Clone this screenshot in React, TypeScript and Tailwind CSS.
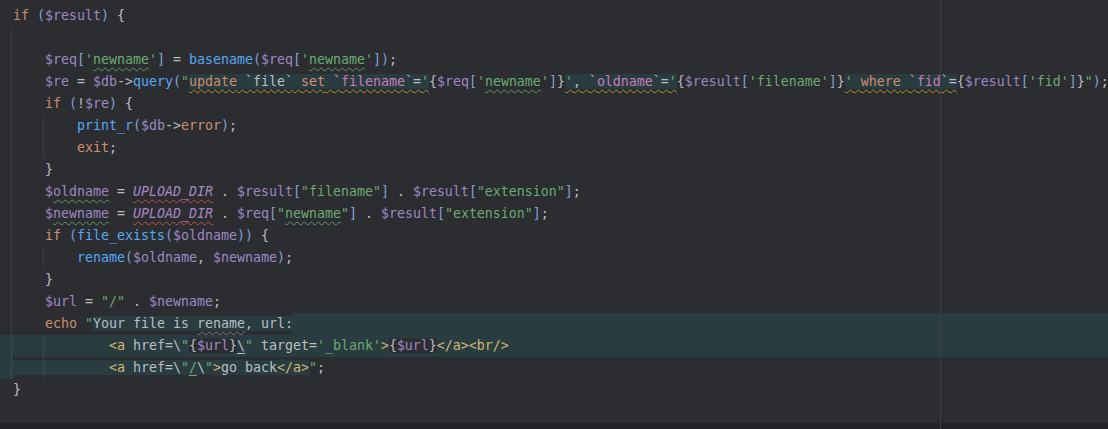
import React from "react";

type Tok = { t: string; c?: string };
type Line = { toks: Tok[]; rowBg?: boolean; leadBg?: boolean; fill?: boolean; g1?: boolean; g2?: boolean };

const D = "text-[#BCBEC4]";
const K = "text-[#CF8E6D]";
const V = "text-[#9F87C6]";
const F = "text-[#56A8F5]";
const S = "text-[#6AAB73]";
const P = "text-[#7FA2D8]";
const SQ = "text-[#C77DBB]";
const TAG = "text-[#D5B778]";
const HL = "bg-[#293C40]";
const NOHL = "bg-[#2B2D30]";
const GW = "underline decoration-wavy decoration-[#5F9A62] underline-offset-[3px] decoration-1";
const RW = "underline decoration-wavy decoration-[#C3504B] underline-offset-[3px] decoration-1";
const YW = "underline decoration-wavy decoration-[#B5962F] underline-offset-[3px] decoration-1";
const GRW = "underline decoration-wavy decoration-[#7A7C80] underline-offset-[3px] decoration-1";
const CONST = "text-[#A786C4] italic";

const t = (text: string, c: string = D): Tok => ({ t: text, c });

const sqlSeg = (toks: Tok[]): Tok[] =>
  toks.map((x) => ({ t: x.t, c: `${x.c} ${HL} ${YW}` }));

const lines: Line[] = [
  { toks: [t("if", K), t(" "), t("(", P), t("$result", V), t(")", P), t(" {")] },
  { toks: [], g1: true },
  {
    g1: true,
    toks: [
      t("    "), t("$req", V), t("[", P), t("'", S), t("newname", `${S} ${GW}`), t("'", S), t("]", P),
      t(" = "), t("basename", F), t("(", P), t("$req", V), t("[", P), t("'", S), t("newname", `${S} ${GW}`),
      t("'", S), t("]", P), t(")", P), t(";"),
    ],
  },
  {
    g1: true,
    toks: [
      t("    "), t("$re", V), t(" = "), t("$db", V), t("->"), t("query", F), t("(", P), t("\"", S),
      ...sqlSeg([t("update", K), t(" "), t("`file`"), t(" "), t("set", K), t(" "), t("`"), t("filename", SQ), t("`"), t("="), t("'", S)]),
      t("{"), t("$req", V), t("[", P), t("'", S), t("newname", `${S} ${GW}`), t("'", S), t("]", P), t("}"),
      ...sqlSeg([t("'", S), t(","), t(" "), t("`"), t("oldname", SQ), t("`"), t("="), t("'", S)]),
      t("{"), t("$result", V), t("[", P), t("'filename'", S), t("]", P), t("}"),
      ...sqlSeg([t("'", S), t(" "), t("where", K), t(" "), t("`"), t("fid", SQ), t("`"), t("=")]),
      t("{"), t("$result", V), t("[", P), t("'fid'", S), t("]", P), t("}"), t("\"", S), t(")", P), t(";"),
    ],
  },
  { g1: true, toks: [t("    "), t("if", K), t(" "), t("(", P), t("!"), t("$re", V), t(")", P), t(" {")] },
  { g1: true, g2: true, toks: [t("        "), t("print_r", F), t("(", P), t("$db", V), t("->"), t("error", K), t(")", P), t(";")] },
  { g1: true, g2: true, toks: [t("        "), t("exit", K), t(";")] },
  { g1: true, toks: [t("    }")] },
  {
    g1: true,
    toks: [
      t("    "), t("$", V), t("oldname", `${V} ${GW}`), t(" = "), t("UPLOAD_DIR", `${CONST} ${RW}`), t(" . "),
      t("$result", V), t("[", P), t("\"filename\"", S), t("]", P), t(" . "), t("$result", V), t("[", P),
      t("\"extension\"", S), t("]", P), t(";"),
    ],
  },
  {
    g1: true,
    toks: [
      t("    "), t("$", V), t("newname", `${V} ${GW}`), t(" = "), t("UPLOAD_DIR", `${CONST} ${RW}`), t(" . "),
      t("$req", V), t("[", P), t("\"", S), t("newname", `${S} ${GW}`), t("\"", S), t("]", P), t(" . "),
      t("$result", V), t("[", P), t("\"extension\"", S), t("]", P), t(";"),
    ],
  },
  {
    g1: true,
    toks: [t("    "), t("if", K), t(" "), t("(", P), t("file_exists", F), t("(", P), t("$oldname", V), t("))", P), t(" {")],
  },
  {
    g1: true,
    g2: true,
    toks: [t("        "), t("rename", F), t("(", P), t("$oldname", V), t(", "), t("$newname", V), t(")", P), t(";")],
  },
  { g1: true, toks: [t("    }")] },
  { g1: true, toks: [t("    "), t("$url", V), t(" = "), t("\"/\"", S), t(" . "), t("$newname", V), t(";")] },
  {
    g1: true,
    fill: true,
    toks: [
      t("    "), t("echo", K), t(" "), t("\"", S),
      t("Your file is ", `${D} ${HL}`), t("rename", `${D} ${HL} ${GRW}`), t(", url:", `${D} ${HL}`),
    ],
  },
  {
    g1: true,
    g2: true,
    rowBg: true,
    toks: [
      t("            "), t("<a", TAG), t(" "), t("href"), t("="), t("\\"), t("\"", S),
      t("{", `${D} ${NOHL}`), t("$url", `${V} ${NOHL}`), t("}", `${D} ${NOHL}`),
      t("\\", `${D} underline underline-offset-[3px]`), t("\"", S), t(" "), t("target"), t("="), t("'_blank'", S), t(">", TAG),
      t("{", `${D} ${NOHL}`), t("$url", `${V} ${NOHL}`), t("}", `${D} ${NOHL}`),
      t("</a><br/>", TAG),
    ],
  },
  {
    g1: true,
    g2: true,
    leadBg: true,
    toks: [
      t("            ", `${D} ${HL}`), t("<a", `${TAG} ${HL}`), t(" ", HL), t("href", `${D} ${HL}`), t("=", `${D} ${HL}`),
      t("\\", `${D} ${HL}`), t("\"", `${S} ${HL}`), t("/", `${S} ${HL} underline underline-offset-[3px]`),
      t("\\", `${D} ${HL}`), t("\"", `${S} ${HL}`), t(">", `${TAG} ${HL}`), t("go back", `${D} ${HL}`),
      t("</a>", `${TAG} ${HL}`), t("\"", S), t(";"),
    ],
  },
  { toks: [t("}")] },
];

function CodeLine({ line }: { line: Line }) {
  return (
    <div className={`relative flex h-[22px] leading-[22px] ${line.rowBg ? HL : ""}`}>
      <span className={`w-[13px] shrink-0 ${line.leadBg ? HL : ""}`} />
      <span className="whitespace-pre shrink-0">
        {line.toks.map((tk, i) => (
          <span key={i} className={tk.c}>
            {tk.t}
          </span>
        ))}
      </span>
      <span className={`flex-1 ${line.fill ? HL : ""}`} />
      {line.g1 && <span className="absolute left-[11px] top-0 bottom-0 w-px bg-[#ffffff14]" />}
      {line.g2 && <span className="absolute left-[43px] top-0 bottom-0 w-px bg-[#ffffff14]" />}
    </div>
  );
}

export default function App() {
  return (
    <div
      className="relative flex h-[429px] w-[1108px] flex-col overflow-hidden bg-[#2B2D30] text-[13.29px] text-[#BCBEC4]"
      style={{ fontFamily: '"DejaVu Sans Mono", "Liberation Mono", monospace' }}
    >
      <div className="flex-1 overflow-hidden pt-[5px]">
        {lines.map((l, i) => (
          <CodeLine key={i} line={l} />
        ))}
      </div>
      <div className="h-[6px] shrink-0 bg-[#232428]" />
      <div className="pointer-events-none absolute left-[940px] top-0 bottom-0 w-px bg-[#3C3E43]" />
    </div>
  );
}
